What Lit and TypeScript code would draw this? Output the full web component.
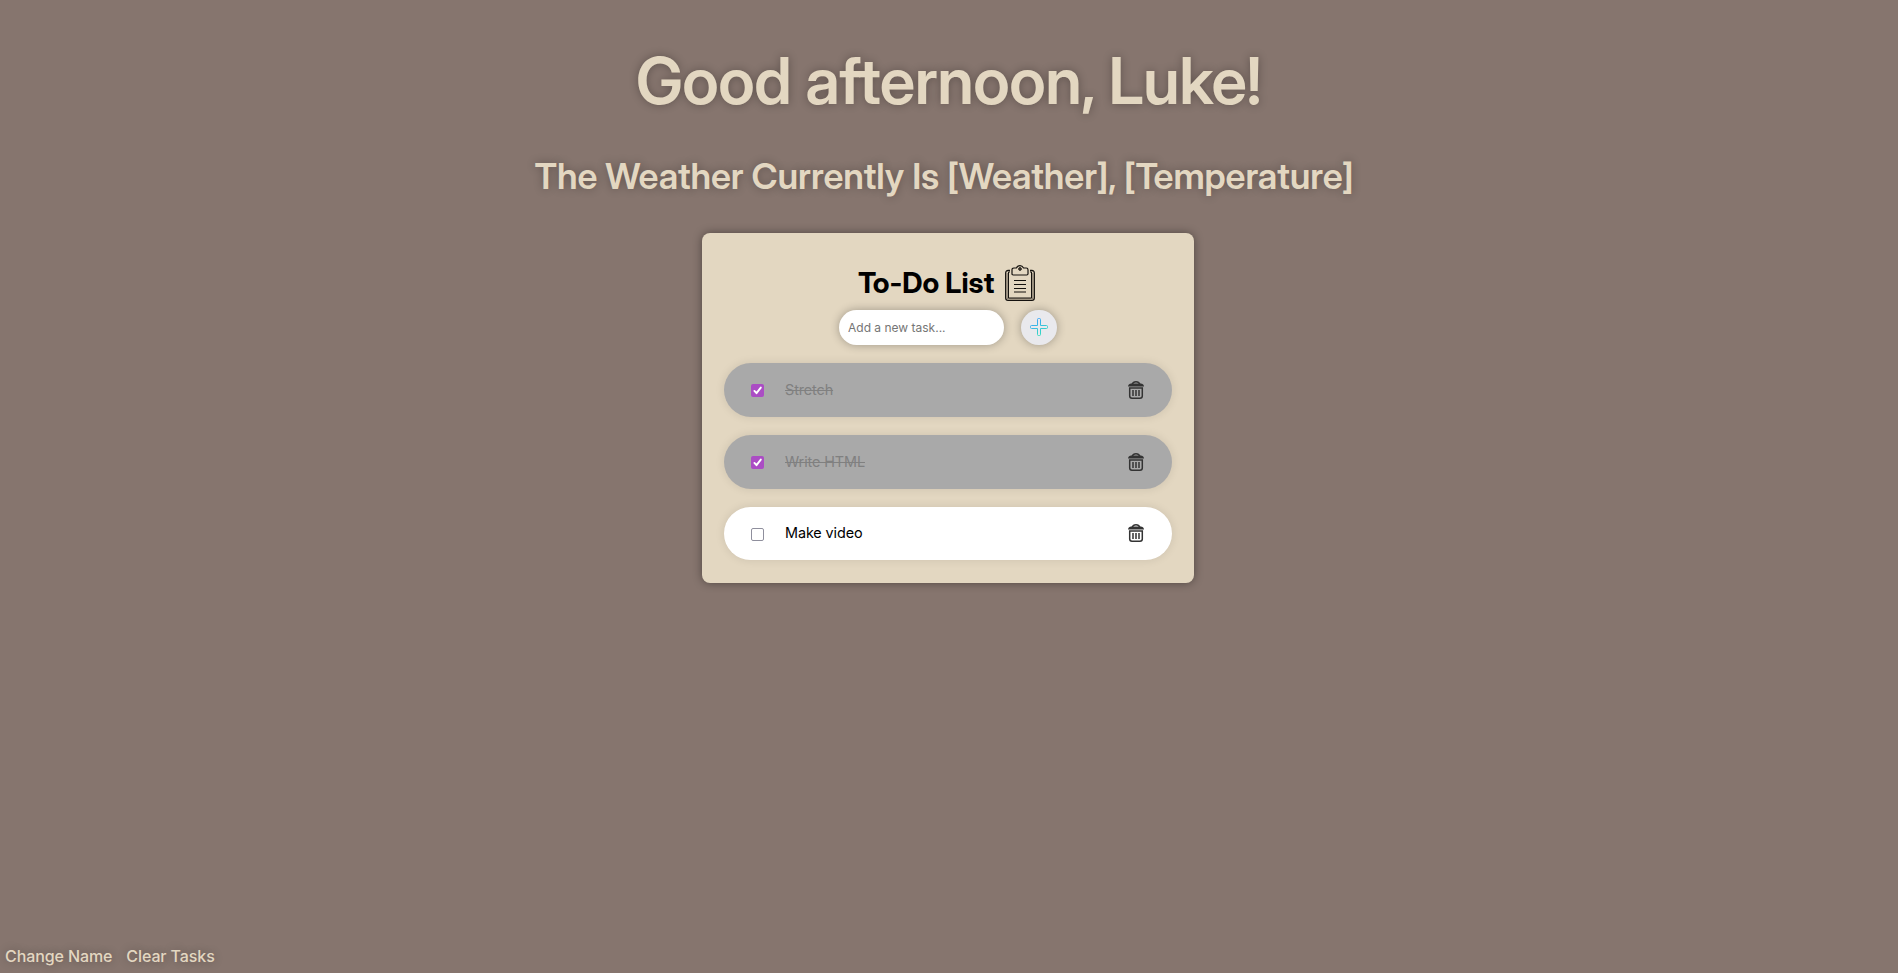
import { LitElement, html, css, svg } from "lit";
import { customElement, state } from "lit/decorators.js";
import { classMap } from "lit/directives/class-map.js";

interface Task {
  name: string;
  done: boolean;
}

const clipboard = svg`
  <svg class="clipboard" viewBox="0 0 30 36" fill="none" stroke="#14110e">
    <path d="M5 5.500H3.200C1.600 5.500.7 6.400.7 8v25c0 1.500.8 2.300 2.300 2.300h24c1.500 0 2.300-.8 2.300-2.300V8c0-1.600-.9-2.500-2.500-2.500H25" stroke-width="1.300"/>
    <path d="M2.200 8v24.500c0 .9.400 1.300 1.300 1.300h23c.9 0 1.300-.4 1.300-1.300V8" stroke="#8d8272" stroke-width="1.200"/>
    <path d="M5 7H3.500v26h23V7H25" stroke-width="1"/>
    <path d="M7 9.500V4.800c0-1.200.7-1.800 1.800-1.800h2.600C12.300 1.400 13.300.7 15 .7s2.700.7 3.600 2.300h2.600c1.100 0 1.800.6 1.800 1.800v4c0 .8-.5 1.200-1.200 1.200H8.200C7.400 10 7 9.600 7 8.800" stroke-width="1.200"/>
    <circle cx="15" cy="4" r="1.400" fill="#4b443a" stroke-width=".8"/>
    <path d="M9 15.500h12M9 19.500h12M9 23.500h12M9 27h12" stroke-width="1.200"/>
  </svg>`;

const plus = svg`
  <svg class="plus" viewBox="0 0 18 18" fill="none">
    <defs>
      <linearGradient id="plus-line" gradientUnits="userSpaceOnUse" x1="5" y1="2" x2="13" y2="16">
        <stop offset="0" stop-color="#3ba4f6"/>
        <stop offset="1" stop-color="#36dcc0"/>
      </linearGradient>
    </defs>
    <path d="M8.500.5h1a1 1 0 0 1 1 1v6h6a1 1 0 0 1 1 1v1a1 1 0 0 1-1 1h-6v6a1 1 0 0 1-1 1h-1a1 1 0 0 1-1-1v-6h-6a1 1 0 0 1-1-1v-1a1 1 0 0 1 1-1h6v-6a1 1 0 0 1 1-1z" stroke="url(#plus-line)"/>
  </svg>`;

const trash = () => svg`
  <svg class="trash" viewBox="0 0 16 18" fill="none" stroke="#333">
    <path d="M4.200 3.200C4.800 1.500 6 .8 8 .8s3.200.7 3.800 2.400" stroke-width="1.500"/>
    <path d="M0 5.400C.4 3.600 1.500 2.600 3.200 2.600h9.600c1.700 0 2.800 1 3.200 2.800z" fill="#333" stroke="none"/>
    <path d="M1.700 7h12.600v8c0 1.500-.8 2.200-2.300 2.200H4c-1.500 0-2.300-.7-2.300-2.200z" stroke-width="1.500"/>
    <path d="M5 9v6M8 9v6M11 9v6" stroke-width="1.500"/>
  </svg>`;

@customElement("app-root")
export class AppRoot extends LitElement {
  @state() private tasks: Task[] = [
    { name: "Stretch", done: true },
    { name: "Write HTML", done: true },
    { name: "Make video", done: false },
  ];

  static styles = css`
    :host {
      display: flex;
      flex-direction: column;
      align-items: center;
      box-sizing: border-box;
      width: 100%;
      height: 100vh;
      overflow: hidden;
      background: #86756e;
      color: #e3d7c1;
      font-family: Inter, "Liberation Sans", sans-serif;
    }
    h1, h2, h3 {
      margin: 0;
      font-family: "Inter Display", Inter, "Liberation Sans", sans-serif;
      font-weight: 600;
      white-space: nowrap;
    }
    h1 {
      margin: 42px 1px 0 0;
      font-size: 64px;
      line-height: 78px;
      letter-spacing: -0.55px;
      text-shadow: 0 0 10px rgba(0, 0, 0, 0.3);
    }
    h2 {
      margin: 34px 10px 0 0;
      font-size: 36px;
      line-height: 44px;
      letter-spacing: -0.1px;
      text-shadow: 0 0 10px rgba(0, 0, 0, 0.3);
    }
    .card {
      box-sizing: border-box;
      width: 492px;
      height: 350px;
      margin: 35px 2px 0 0;
      padding: 32px 22px 0;
      border-radius: 8px;
      background: #e3d7c1;
      box-shadow: 0 0 10px rgba(0, 0, 0, 0.4);
      color: #000;
    }
    .title { display: flex; gap: 12px; padding-left: 134px; height: 36px; }
    h3 { width: 135px; font-size: 28.800px; line-height: 36px; font-weight: 700; }
    .clipboard { width: 30px; height: 36px; flex: none; }
    .entry { display: flex; gap: 17px; margin-top: 9px; padding-left: 115px; }
    .entry input {
      box-sizing: border-box;
      width: 165px;
      height: 35px;
      padding: 0 9px;
      border: 0;
      border-radius: 18px;
      background: #fff;
      box-shadow: 0 0 10px rgba(0, 0, 0, 0.3);
      font: 12px Inter, "Liberation Sans", sans-serif;
    }
    .entry input::placeholder { color: #757575; }
    .add {
      display: flex;
      align-items: center;
      justify-content: center;
      box-sizing: border-box;
      width: 36px;
      height: 35px;
      padding: 0 0 1px;
      border: 0;
      border-radius: 18px;
      background: #e9e9ed;
      box-shadow: 0 0 10px rgba(0, 0, 0, 0.3);
    }
    .plus { width: 18px; height: 18px; }
    .list { display: flex; flex-direction: column; gap: 18px; margin: 18px 0 0; padding: 0; list-style: none; }
    .task {
      display: flex;
      align-items: center;
      box-sizing: border-box;
      height: 54px;
      padding: 0 28px 0 27px;
      border-radius: 27px;
      background: #fff;
      box-shadow: 0 0 10px rgba(0, 0, 0, 0.1);
      font-size: 14.400px;
      letter-spacing: -0.1px;
    }
    .task:last-child { height: 53px; }
    .done { background: #a9a9a9; color: #808080; }
    .done .name { text-decoration: line-through; }
    .box {
      box-sizing: border-box;
      width: 13px;
      height: 13px;
      margin-top: 1px;
      border: 1px solid #8f8f9d;
      border-radius: 2px;
      background: #fff;
    }
    .done .box { border: 0; background: #ab4dc4; }
    .check { display: block; width: 13px; height: 13px; }
    .name { flex: 1; margin-left: 21px; padding-bottom: 2px; }
    .trash { display: block; width: 16px; height: 18px; }
    .task:last-child .trash { margin-bottom: 1px; }
    .links {
      display: flex;
      gap: 14px;
      align-self: flex-start;
      margin: auto 0 7px 5px;
      font-size: 16px;
      line-height: 20px;
      font-weight: 500;
      letter-spacing: -0.1px;
      text-shadow: 0 0 10px rgba(0, 0, 0, 0.3);
    }
  `;

  private toggle(index: number) {
    this.tasks = this.tasks.map((t, i) => (i === index ? { ...t, done: !t.done } : t));
  }

  private remove(index: number) {
    this.tasks = this.tasks.filter((_, i) => i !== index);
  }

  render() {
    return html`
      <h1>Good afternoon, Luke!</h1>
      <h2>The Weather Currently Is [Weather], [Temperature]</h2>
      <section class="card">
        <div class="title"><h3>To-Do List</h3>${clipboard}</div>
        <div class="entry">
          <input type="text" placeholder="Add a new task..." />
          <button class="add" aria-label="Add task">${plus}</button>
        </div>
        <ul class="list">
          ${this.tasks.map(
            (task, i) => html`
              <li class=${classMap({ task: true, done: task.done })}>
                <span class="box" role="checkbox" aria-checked=${task.done} @click=${() => this.toggle(i)}>
                  ${task.done
                    ? html`<svg class="check" viewBox="0 0 13 13" fill="none" stroke="#fff" stroke-width="1.900" stroke-linecap="round" stroke-linejoin="round"><path d="M3.400 6.900l2.100 2.300 4.300-5.600" /></svg>`
                    : null}
                </span>
                <span class="name">${task.name}</span>
                <span @click=${() => this.remove(i)}>${trash()}</span>
              </li>
            `
          )}
        </ul>
      </section>
      <nav class="links"><span>Change Name</span><span>Clear Tasks</span></nav>
    `;
  }
}
